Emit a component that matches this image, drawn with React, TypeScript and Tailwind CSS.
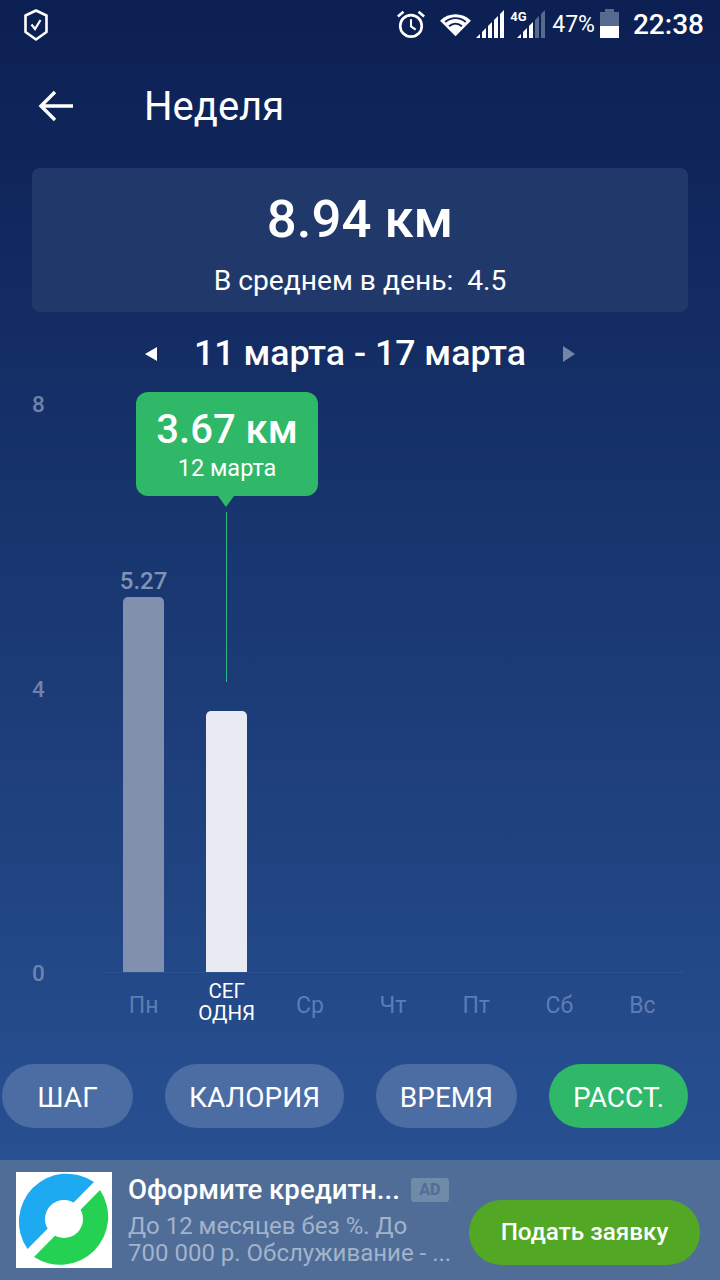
const days = ["Пн", "СЕГ ОДНЯ", "Ср", "Чт", "Пт", "Сб", "Вс"];

function StatusBar() {
  return (
    <div className="flex h-[50px] items-center pl-[24px] pr-[16px] text-white">
      <svg width="24" height="32" viewBox="0 0 24 32" fill="none" stroke="white" strokeWidth="2.6">
        <path d="M12 1.5 L22.5 6.5 V23 L12 30.5 L1.5 23 V6.5 Z" strokeLinejoin="round" />
        <path d="M7.5 15.5 L11 20 L16.5 11" strokeWidth="2.2" />
      </svg>
      <div className="ml-auto flex items-center">
        <svg className="mb-[2px]" width="30" height="30" viewBox="0 0 32 32" fill="none" stroke="white" strokeWidth="2.8">
          <circle cx="16" cy="18" r="11.5" />
          <path d="M16 11 V18.5 L21 22" strokeWidth="2.2" />
          <path d="M2 8 L8 3 M30 8 L24 3" strokeWidth="2.8" />
        </svg>
        <svg className="ml-[12px]" width="35" height="24" viewBox="0 0 36 28" fill="white">
          <path d="M18 27 L0 9 C10 -1 26 -1 36 9 Z" />
          <path d="M6 10.5 C13 4.5 23 4.5 30 10.5 M10.5 15.5 C15 11.5 21 11.5 25.5 15.5" stroke="#0d2154" strokeWidth="2.2" fill="none" />
        </svg>
        <svg className="mb-[2px] ml-[3px]" width="28" height="28" viewBox="0 0 28 28" fill="white">
          <path d="M0 28 L4 24 V28 Z M6 22 L10 18 V28 H6 Z M12 16 L16 12 V28 H12 Z M18 10 L22 6 V28 H18 Z M24 4 L28 0 V28 H24 Z" />
        </svg>
        <div className="relative mb-[2px] ml-[6px] h-[28px] w-[35px]">
          <span className="absolute left-0 top-0 text-[13px] font-bold leading-[14px]">4G</span>
          <svg className="absolute left-[7px] top-0" width="28" height="28" viewBox="0 0 28 28">
            <path d="M0 28 L4 24 V28 Z M6 22 L10 18 V28 H6 Z M12 16 L16 12 V28 H12 Z" fill="white" />
            <path d="M18 10 L22 6 V28 H18 Z M24 4 L28 0 V28 H24 Z" fill="#56698f" />
          </svg>
        </div>
        <span className="mb-[2px] ml-[7px] text-[23px] leading-none">47%</span>
        <div className="mb-[3px] ml-[5px] flex h-[29px] w-[19px] flex-col items-center">
          <div className="h-[3px] w-[9px] bg-[#56698f]" />
          <div className="h-[14px] w-full bg-[#56698f]" />
          <div className="h-[12px] w-full bg-white" />
        </div>
        <span className="ml-[14px] text-[28px] font-medium leading-none">22:38</span>
      </div>
    </div>
  );
}

function Chart() {
  return (
    <div className="relative mt-[18px] flex h-[670px] pl-[32px]">
      <div className="-mt-px flex h-[595px] w-[70px] flex-col justify-between text-[22.5px] font-medium leading-[26px] text-[#6d83ae]">
        <span>8</span>
        <span>4</span>
        <span>0</span>
      </div>
      <div className="w-[582px]">
        <div className="grid h-[581px] grid-cols-7 border-b border-[#2d5290]">
          <div className="flex flex-col items-center justify-end">
            <span className="mb-[2px] text-[24px] font-medium leading-[28px] text-[#8093b6]">5.27</span>
            <div className="h-[375px] w-[41px] rounded-t-[5px] bg-[#8090ad]" />
          </div>
          <div className="flex flex-col items-center justify-end">
            <div className="h-[261px] w-[41px] rounded-t-[5px] bg-[#e8ebf1]" />
          </div>
        </div>
        <div className="grid grid-cols-7 pt-[7px]">
          {days.map((day, i) =>
            i === 1 ? (
              <div key={day} className="mx-auto w-[60px] text-center text-[20.5px] leading-[22px] text-white">
                {day}
              </div>
            ) : (
              <div key={day} className="pt-[13px] text-center text-[23px] leading-[26px] text-[#5d7db4]">
                {day}
              </div>
            ),
          )}
        </div>
      </div>
      {/* tooltip */}
      <div className="absolute left-[136px] top-0 flex w-[182px] flex-col items-center">
        <div className="flex h-[104px] w-full flex-col items-center rounded-[12px] bg-[#2eb868] pt-[14px] text-white">
          <span className="text-[40px] font-medium leading-[48px]">3.67 км</span>
          <span className="mt-[1px] text-[23.5px] leading-[26px]">12 марта</span>
        </div>
        <div className="mr-[2px] h-0 w-0 border-x-[8px] border-t-[11px] border-x-transparent border-t-[#2eb868]" />
        <div className="mr-[1px] mt-[5px] h-[170px] w-px bg-[#2fb884]" />
      </div>
    </div>
  );
}

function Pills() {
  return (
    <div className="mt-[2px] flex h-[64px] gap-[32px] pl-[2px] pt-0 text-[28px] leading-none text-white">
      <div className="flex w-[131px] items-center justify-center rounded-full bg-[#4b6da3] pt-[3px]">ШАГ</div>
      <div className="flex w-[179px] items-center justify-center rounded-full bg-[#4b6da3] pt-[3px]">КАЛОРИЯ</div>
      <div className="flex w-[141px] items-center justify-center rounded-full bg-[#4b6da3] pt-[3px]">ВРЕМЯ</div>
      <div className="flex w-[139px] items-center justify-center rounded-full bg-[#2eb868] pt-[3px]">РАССТ.</div>
    </div>
  );
}

function Ad() {
  return (
    <div className="mt-[32px] flex h-[120px] items-center bg-[#506d98] pl-[16px] pr-[20px]">
      <svg className="shrink-0 bg-white" width="96" height="96" viewBox="0 0 96 96">
        <path d="M78 10 L11.5 77 A48 48 0 0 1 78 10 Z" fill="#1eaaf1" />
        <path d="M84 18 L18 85 A48 48 0 0 0 84 18 Z" fill="#25d153" />
        <circle cx="48" cy="47" r="19" fill="white" />
      </svg>
      <div className="ml-[16px] w-[325px] shrink-0">
        <div className="flex items-center">
          <span className="text-[27.6px] font-medium leading-[34px] text-white">Оформите кредитн...</span>
          <span className="ml-[11px] flex h-[24px] w-[38px] items-center justify-center rounded-[3px] bg-[#6e8ba7] text-[16px] font-bold text-[#4f6d95]">AD</span>
        </div>
        <p className="mt-[6px] text-[24px] leading-[27px] text-[#a2b3cb]">
          До 12 месяцев без %. До
          <br />
          700 000 р. Обслуживание - ...
        </p>
      </div>
      <div className="ml-auto mt-[24px] flex h-[65px] w-[231px] items-center justify-center rounded-full bg-[#52a824] text-[24.3px] font-medium text-white">
        Подать заявку
      </div>
    </div>
  );
}

export default function App() {
  return (
    <div className="flex h-[1280px] w-[720px] flex-col overflow-hidden bg-gradient-to-b from-[#0c1f52] to-[#2b5699] font-['Roboto',sans-serif]">
      <StatusBar />
      <div className="flex h-[112px] items-center pl-[38px] text-white">
        <svg width="36" height="32" viewBox="0 0 36 32" fill="none" stroke="white" strokeWidth="3.4">
          <path d="M35 16 H3 M17 2 L3 16 L17 30" />
        </svg>
        <span className="ml-[70px] pt-[2px] text-[40px] leading-none">Неделя</span>
      </div>
      <div className="mx-[32px] mt-[6px] flex h-[144px] flex-col items-center rounded-[8px] bg-[#21396a] text-white">
        <span className="mt-[16px] text-[52.7px] font-medium leading-[70px]">8.94 км</span>
        <span className="mt-[9px] text-[28.2px] leading-[36px]">В среднем в день:&nbsp; 4.5</span>
      </div>
      <div className="mt-[22px] flex h-[40px] items-center justify-center text-white">
        <div className="h-0 w-0 border-y-[7px] border-r-[12px] border-y-transparent border-r-white" />
        <span className="mx-[37px] text-[35.7px] font-medium leading-none">11 марта - 17 марта</span>
        <div className="h-0 w-0 border-y-[8px] border-l-[12px] border-y-transparent border-l-[#7386a8]" />
      </div>
      <Chart />
      <Pills />
      <Ad />
    </div>
  );
}
